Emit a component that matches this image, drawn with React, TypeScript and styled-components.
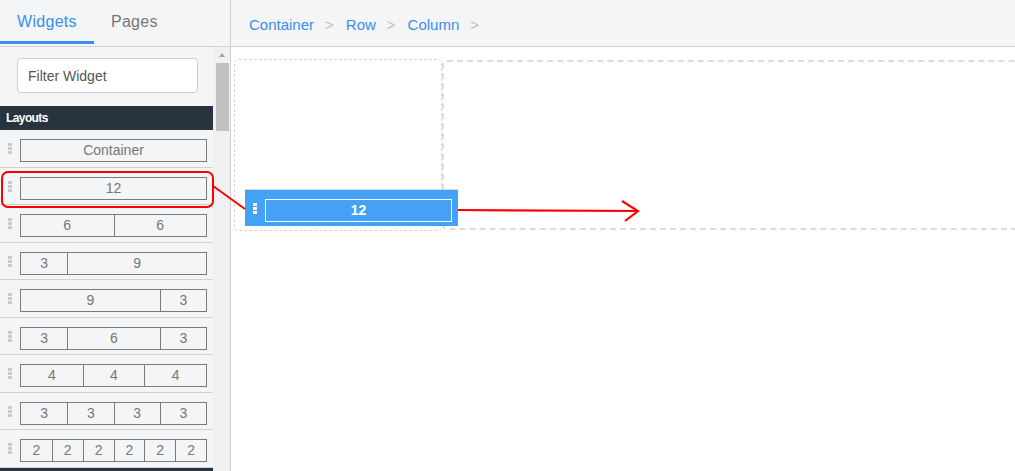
import React from "react";
import styled, { createGlobalStyle } from "styled-components";

const GlobalStyle = createGlobalStyle`
  html, body { margin: 0; padding: 0; }
  body {
    font-family: "Liberation Sans", Arial, sans-serif;
    overflow: hidden;
    background: #fff;
  }
  * { box-sizing: border-box; }
`;

const BLUE = "#3a8ef0";

const Page = styled.div`
  position: relative;
  display: flex;
  width: 1015px;
  height: 471px;
  overflow: hidden;
`;

const Sidebar = styled.aside`
  width: 231px;
  flex: none;
  display: flex;
  flex-direction: column;
  background: #f4f5f7;
  border-right: 1px solid #cfcfcf;
`;

const Tabs = styled.div`
  display: flex;
  height: 47px;
  flex: none;
  border-bottom: 1px solid #d3d3d3;
`;

const Tab = styled.div<{ $active?: boolean }>`
  height: 44px;
  padding: 13px 17px 10px;
  font-size: 16px;
  line-height: 18px;
  letter-spacing: 0.3px;
  color: ${(p) => (p.$active ? BLUE : "#777")};
  border-bottom: 3px solid ${(p) => (p.$active ? BLUE : "transparent")};
`;

const SideBody = styled.div`
  flex: 1;
  display: flex;
  min-height: 0;
`;

const ScrollContent = styled.div`
  width: 213px;
  flex: none;
  overflow: hidden;
`;

const Scrollbar = styled.div`
  width: 17px;
  flex: none;
  background: #f0f0f0;
  display: flex;
  flex-direction: column;
  align-items: center;
`;

const ScrollArrow = styled.div`
  height: 16px;
  display: flex;
  align-items: center;
  justify-content: center;
  padding-left: 1px;
  &::before {
    content: "";
    border-left: 3.5px solid transparent;
    border-right: 3.5px solid transparent;
    border-bottom: 4px solid #a3a3a3;
  }
`;

const ScrollThumb = styled.div`
  width: 13px;
  height: 68px;
  background: #c1c1c1;
  margin-left: 1px;
`;

const FilterWrap = styled.div`
  padding: 11px 16px 13px 17px;
`;

const FilterInput = styled.input`
  display: block;
  width: 181px;
  height: 35px;
  border: 1px solid #cccccc;
  border-radius: 4px;
  background: #fff;
  padding: 0 10px;
  font-family: "Liberation Sans", Arial, sans-serif;
  font-size: 14px;
  color: #555;
  outline: none;
  &::placeholder { color: #555; }
`;

const SectionHeader = styled.div`
  height: 24px;
  background: #283340;
  color: #fff;
  font-weight: bold;
  font-size: 12px;
  letter-spacing: -0.6px;
  line-height: 24px;
  padding-left: 6px;
`;

const LayoutRow = styled.div`
  display: flex;
  align-items: flex-start;
  height: 37.5px;
  padding: 9px 6px 0 8px;
  border-bottom: 1px solid #d2d2d2;
`;

const Handle = styled.div<{ $light?: boolean }>`
  width: 4px;
  height: 11px;
  margin-top: 4px;
  margin-right: 8px;
  flex: none;
  background: repeating-linear-gradient(
    to bottom,
    ${(p) => (p.$light ? "#ffffff" : "#c9cbc6")} 0 3px,
    transparent 3px 4px
  );
`;

const ColBox = styled.div<{ $cols: string; $light?: boolean }>`
  flex: 1;
  height: 23px;
  display: grid;
  grid-template-columns: ${(p) => p.$cols};
  border: 1px solid ${(p) => (p.$light ? "#fff" : "#7a7a7a")};
`;

const Cell = styled.div<{ $light?: boolean }>`
  display: flex;
  align-items: center;
  justify-content: center;
  font-size: 14px;
  line-height: 21px;
  color: ${(p) => (p.$light ? "#fff" : "#777")};
  font-weight: ${(p) => (p.$light ? "bold" : "normal")};
  & + & { border-left: 1px solid #7a7a7a; }
`;

const Main = styled.main`
  flex: 1;
  display: flex;
  flex-direction: column;
  min-width: 0;
  overflow: hidden;
`;

const Breadcrumb = styled.nav`
  height: 47px;
  flex: none;
  display: flex;
  align-items: flex-start;
  padding: 16px 0 0 18px;
  background: #f4f5f7;
  border-bottom: 1px solid #d0d0d0;
  font-size: 15px;
  line-height: 18px;
`;

const Crumb = styled.span`
  color: ${BLUE};
`;

const Sep = styled.span`
  color: #bdbdbd;
  margin: 0 12px 0 11px;
`;

const Canvas = styled.div`
  padding: 12px 0 0 3px;
`;

const RowArea = styled.div`
  display: flex;
  align-items: flex-start;
  width: 800px;
`;

const LeftCol = styled.div`
  width: 208px;
  height: 172px;
  flex: none;
  border: 1px dashed #d6d6d6;
  border-radius: 5px;
`;

const RightCol = styled.div`
  flex: 1;
  height: 170px;
  margin-top: 1px;
  border: 2px dashed #dcdcdc;
  border-right: none;
  border-radius: 5px 0 0 5px;
`;

const Ghost = styled.div`
  position: absolute;
  left: 245px;
  top: 189px;
  width: 213px;
  border-top: 1px solid #d8d8d8;
`;

const GhostBody = styled.div`
  display: flex;
  align-items: flex-start;
  height: 36px;
  padding: 9px 6px 0 8px;
  background: #44a2f6;
`;

const Annotations = styled.svg`
  position: absolute;
  left: 0;
  top: 0;
  pointer-events: none;
`;

const layouts: number[][] = [
  [12],
  [6, 6],
  [3, 9],
  [9, 3],
  [3, 6, 3],
  [4, 4, 4],
  [3, 3, 3, 3],
  [2, 2, 2, 2, 2, 2],
];

const colsOf = (c: number[]) => c.map((n) => `${n}fr`).join(" ");

export default function App() {
  return (
    <>
      <GlobalStyle />
      <Page>
        <Sidebar>
          <Tabs>
            <Tab $active>Widgets</Tab>
            <Tab>Pages</Tab>
          </Tabs>
          <SideBody>
            <ScrollContent>
              <FilterWrap>
                <FilterInput placeholder="Filter Widget" />
              </FilterWrap>
              <SectionHeader>Layouts</SectionHeader>
              <LayoutRow>
                <Handle />
                <ColBox $cols="1fr">
                  <Cell>Container</Cell>
                </ColBox>
              </LayoutRow>
              {layouts.map((cols, i) => (
                <LayoutRow key={i}>
                  <Handle />
                  <ColBox $cols={colsOf(cols)}>
                    {cols.map((n, j) => (
                      <Cell key={j}>{n}</Cell>
                    ))}
                  </ColBox>
                </LayoutRow>
              ))}
              <SectionHeader />
            </ScrollContent>
            <Scrollbar>
              <ScrollArrow />
              <ScrollThumb />
            </Scrollbar>
          </SideBody>
        </Sidebar>
        <Main>
          <Breadcrumb>
            <Crumb>Container</Crumb>
            <Sep>&gt;</Sep>
            <Crumb>Row</Crumb>
            <Sep>&gt;</Sep>
            <Crumb>Column</Crumb>
            <Sep>&gt;</Sep>
          </Breadcrumb>
          <Canvas>
            <RowArea>
              <LeftCol />
              <RightCol />
            </RowArea>
          </Canvas>
        </Main>
        <Ghost>
          <GhostBody>
            <Handle $light />
            <ColBox $cols="1fr" $light>
              <Cell $light>12</Cell>
            </ColBox>
          </GhostBody>
        </Ghost>
        <Annotations width="1015" height="471" viewBox="0 0 1015 471">
          <rect x="2" y="172" width="211" height="35" rx="6" ry="6" fill="none" stroke="#ff0000" strokeWidth="2" />
          <line x1="213" y1="186" x2="245" y2="209" stroke="#ff0000" strokeWidth="2" />
          <line x1="458" y1="210" x2="638" y2="211" stroke="#ff0000" strokeWidth="2.2" />
          <polyline points="622,201 638,211 625,221" fill="none" stroke="#ff0000" strokeWidth="2.2" />
        </Annotations>
      </Page>
    </>
  );
}
